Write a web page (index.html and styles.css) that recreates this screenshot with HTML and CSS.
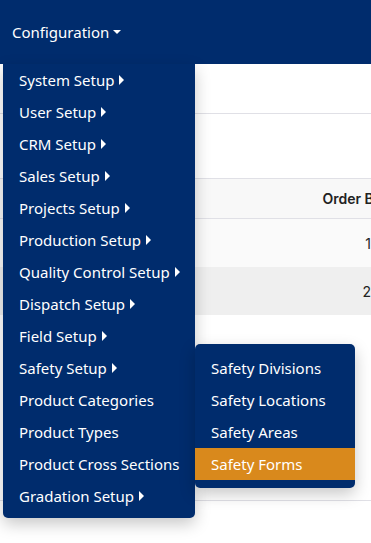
FILE: index.html
```html
<!DOCTYPE html>
<html lang="en">
<head>
    <meta charset="UTF-8">
    <meta name="viewport" content="width=device-width, initial-scale=1.0">
    <title>Configuration</title>
    <link rel="stylesheet" href="styles.css">
</head>
<body>
    <nav class="navbar">
        <a href="#" class="nav-link">Configuration <span class="caret-down"></span></a>

        <ul class="dropdown-menu">
            <li><a href="#">System Setup <span class="caret-right"></span></a></li>
            <li><a href="#">User Setup <span class="caret-right"></span></a></li>
            <li><a href="#">CRM Setup <span class="caret-right"></span></a></li>
            <li><a href="#">Sales Setup <span class="caret-right"></span></a></li>
            <li><a href="#">Projects Setup <span class="caret-right"></span></a></li>
            <li><a href="#">Production Setup <span class="caret-right"></span></a></li>
            <li><a href="#">Quality Control Setup <span class="caret-right"></span></a></li>
            <li><a href="#">Dispatch Setup <span class="caret-right"></span></a></li>
            <li><a href="#">Field Setup <span class="caret-right"></span></a></li>
            <li class="has-sub">
                <a href="#">Safety Setup <span class="caret-right"></span></a>
                <ul class="submenu">
                    <li><a href="#">Safety Divisions</a></li>
                    <li><a href="#">Safety Locations</a></li>
                    <li><a href="#">Safety Areas</a></li>
                    <li><a href="#" class="active">Safety Forms</a></li>
                </ul>
            </li>
            <li><a href="#">Product Categories</a></li>
            <li><a href="#">Product Types</a></li>
            <li><a href="#">Product Cross Sections</a></li>
            <li><a href="#">Gradation Setup <span class="caret-right"></span></a></li>
        </ul>
    </nav>

    <div class="content">
        <div class="page-head"></div>
        <div class="toolbar"></div>
        <table class="grid">
            <thead>
                <tr><th></th><th class="num">Order By</th></tr>
            </thead>
            <tbody>
                <tr><td></td><td class="num">1</td></tr>
                <tr class="alt"><td></td><td class="num">2</td></tr>
            </tbody>
        </table>
        <div class="footer-line"></div>
    </div>
</body>
</html>
```

FILE: styles.css
```css
body {
    margin: 0;
    font-family: "Noto Sans", "Open Sans", sans-serif;
    background: white;
    overflow: hidden;
    width: 371px;
    height: 543px;
}
.navbar {
    background-color: #002c6d;
    height: 64px;
    display: flex;
    align-items: center;
    position: relative;
}
.nav-link {
    color: white;
    text-decoration: none;
    font-size: 15px;
    padding-left: 12px;
    display: flex;
    align-items: center;
    gap: 2px;
}
.caret-down {
    display: inline-block;
    border-left: 4px solid transparent;
    border-right: 4px solid transparent;
    border-top: 4px solid white;
    margin-left: 2px;
}
.caret-right {
    display: inline-block;
    border-top: 5px solid transparent;
    border-bottom: 5px solid transparent;
    border-left: 5px solid white;
    margin-left: 1px;
}
.dropdown-menu, .submenu {
    list-style: none;
    margin: 0;
    background-color: #002c6d;
    box-shadow: 0 6px 16px rgba(0,0,0,0.22);
    z-index: 10;
}
.dropdown-menu {
    position: absolute;
    top: 64px;
    left: 3px;
    width: 192px;
    padding: 0 0 6px 0;
    border-radius: 0 0 5px 5px;
}
.dropdown-menu li {
    position: relative;
}
.dropdown-menu a {
    display: flex;
    align-items: center;
    gap: 4px;
    height: 32px;
    padding-left: 16px;
    color: white;
    text-decoration: none;
    font-size: 15px;
    white-space: nowrap;
}
.submenu {
    position: absolute;
    top: -8px;
    left: 192px;
    width: 160px;
    padding: 8px 0;
    border-radius: 5px;
}
.submenu a.active {
    background-color: #d9891c;
}
.content {
    width: 390px;
}
.page-head {
    height: 49px;
    border-bottom: 1px solid #e0e0e6;
}
.toolbar {
    height: 64px;
}
.grid {
    width: 390px;
    border-collapse: collapse;
    font-family: Inter, "Liberation Sans", sans-serif;
    font-size: 14px;
    color: #222;
}
.grid th {
    height: 39px;
    padding: 0;
    background-color: #f8f8f8;
    border-top: 1px solid #e0e0e6;
    border-bottom: 1px solid #e0e0e6;
    font-weight: 600;
}
.grid td {
    height: 48px;
    padding: 0;
    background-color: #fafafa;
}
.grid tr.alt td {
    background-color: #efefef;
}
.grid .num {
    text-align: right;
    padding-right: 19px;
    width: 80px;
}
.grid th.num {
    padding-right: 8px;
}
.footer-line {
    margin-top: 185px;
    border-bottom: 1px solid #e0e0e6;
}
```
